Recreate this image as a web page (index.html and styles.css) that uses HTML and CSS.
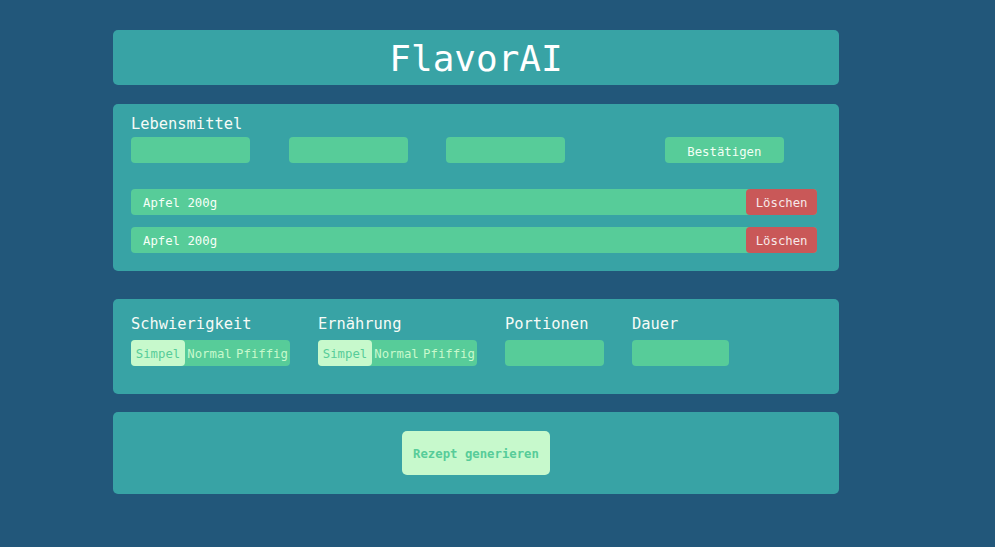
FILE: index.html
```html
<!DOCTYPE html>
<html lang="de">
<head>
<meta charset="utf-8">
<title>FlavorAI</title>
<link rel="stylesheet" href="styles.css">
</head>
<body>
<main class="app">
  <header class="panel header">
    <h1 class="title">FlavorAI</h1>
  </header>

  <section class="panel foods">
    <div class="label">Lebensmittel</div>
    <div class="food-form">
      <div class="input food-input"></div>
      <div class="input food-input"></div>
      <div class="input food-input"></div>
      <button class="btn-confirm">Bestätigen</button>
    </div>
    <ul class="food-list">
      <li class="food-row"><span class="food-name">Apfel 200g</span><button class="btn-delete">Löschen</button></li>
      <li class="food-row"><span class="food-name">Apfel 200g</span><button class="btn-delete">Löschen</button></li>
    </ul>
  </section>

  <section class="panel options">
    <div class="option">
      <div class="label">Schwierigkeit</div>
      <div class="segmented">
        <span class="seg seg-active">Simpel</span><span class="seg seg-mid">Normal</span><span class="seg seg-last">Pfiffig</span>
      </div>
    </div>
    <div class="option">
      <div class="label">Ernährung</div>
      <div class="segmented">
        <span class="seg seg-active">Simpel</span><span class="seg seg-mid">Normal</span><span class="seg seg-last">Pfiffig</span>
      </div>
    </div>
    <div class="option">
      <div class="label">Portionen</div>
      <div class="input input-portions"></div>
    </div>
    <div class="option">
      <div class="label">Dauer</div>
      <div class="input input-duration"></div>
    </div>
  </section>

  <section class="panel generate">
    <button class="btn-generate">Rezept generieren</button>
  </section>
</main>
</body>
</html>
```

FILE: styles.css
```css
* {
  box-sizing: border-box;
}

html, body {
  margin: 0;
  padding: 0;
}

body {
  background: #22577a;
  font-family: "DejaVu Sans Mono", "Liberation Mono", monospace;
  color: #ffffff;
  height: 547px;
  overflow: hidden;
}

.app {
  width: 726px;
  margin-left: 113px;
  padding-top: 30px;
  display: flex;
  flex-direction: column;
}

.panel {
  background: #38a3a5;
  border-radius: 5px;
}

.header {
  height: 55px;
  padding-top: 2px;
}

.title {
  margin: 0;
  font-size: 36px;
  font-weight: normal;
  line-height: 53px;
  text-align: center;
  color: #ffffff;
}

.foods {
  margin-top: 19px;
  padding: 11px 22px 18px 18px;
}

.label {
  font-size: 15.4px;
  line-height: 18px;
  color: #f6fbf7;
  white-space: nowrap;
}

.input {
  height: 26px;
  background: #57cc99;
  border-radius: 4px;
}

.food-form {
  margin-top: 4px;
  display: flex;
  gap: 38.5px;
}

.food-input {
  width: 119px;
}

button {
  font-family: inherit;
  border: none;
  margin: 0;
  cursor: pointer;
}

.btn-confirm {
  margin-left: 61.5px;
  width: 118.7px;
  height: 26px;
  background: #57cc99;
  color: #f2fff4;
  border-radius: 4px;
  font-size: 12.3px;
  padding: 4px 0 0 0;
  line-height: 22px;
}

.food-list {
  list-style: none;
  margin: 26px 0 0 0;
  padding: 0;
  display: flex;
  flex-direction: column;
  gap: 12px;
}

.food-row {
  display: flex;
  justify-content: space-between;
  align-items: stretch;
  height: 26px;
  background: #57cc99;
  border-radius: 4px;
}

.food-name {
  padding: 3px 0 0 12px;
  font-size: 12.3px;
  line-height: 23px;
  color: #f6fff7;
}

.btn-delete {
  background: #c95858;
  color: #f7e8e8;
  border-radius: 4px;
  font-size: 12.3px;
  padding: 3px 9.5px 0 9.5px;
  height: 26px;
  line-height: 23px;
}

.options {
  margin-top: 28px;
  padding: 16px 18px 28px 18px;
  display: flex;
  gap: 28px;
}

.option {
  display: flex;
  flex-direction: column;
  gap: 7px;
}

.segmented {
  display: flex;
  height: 26px;
  width: 159px;
  background: #57cc99;
  border-radius: 4px;
}

.seg {
  font-size: 12.3px;
  padding-top: 3px;
  line-height: 23px;
  color: #c7f9cc;
  text-align: center;
  white-space: nowrap;
}

.seg-active {
  width: 54px;
  background: #c7f9cc;
  color: #57cc99;
  border-radius: 4px;
}

.seg-mid {
  width: 49px;
}

.seg-last {
  width: 56px;
}

.input-portions {
  width: 99px;
}

.input-duration {
  width: 97px;
}

.generate {
  margin-top: 18px;
  padding: 19px 0;
  display: flex;
  justify-content: center;
}

.btn-generate {
  height: 44px;
  padding: 2px 11.5px 0 11.5px;
  line-height: 42px;
  background: #c7f9cc;
  color: #57cc99;
  font-weight: bold;
  font-size: 12.3px;
  border-radius: 5px;
}
```
